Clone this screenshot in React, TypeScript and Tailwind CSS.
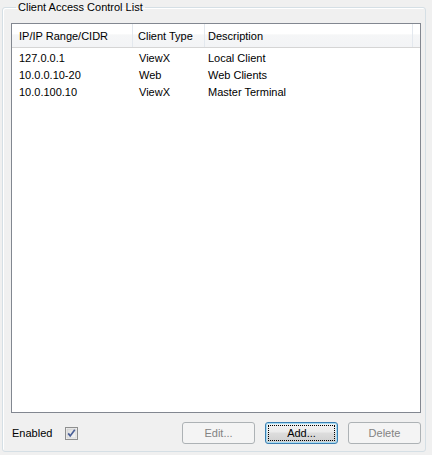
const rows = [
  { ip: '127.0.0.1', type: 'ViewX', desc: 'Local Client' },
  { ip: '10.0.0.10-20', type: 'Web', desc: 'Web Clients' },
  { ip: '10.0.100.10', type: 'ViewX', desc: 'Master Terminal' },
]

function DisabledButton({ label }: { label: string }) {
  return (
    <button
      disabled
      className="flex h-[22px] w-[73px] items-center justify-center rounded-[3px] border border-[#adb2b5] bg-[#f4f4f4] text-[#838383]"
    >
      {label}
    </button>
  )
}

export default function App() {
  return (
    <div
      className="h-[455px] w-[432px] bg-[#f0f0f0] pl-[2px] text-[11px] leading-[14px] text-black"
      style={{ fontFamily: '"Liberation Sans", Arial, sans-serif' }}
    >
      <fieldset className="h-[452px] w-[424px] rounded-[3px] border border-[#d5dfe5] pb-[7px] pl-[8px] pr-[4px] pt-[9px] shadow-[inset_1px_1px_0_#ffffff]">
        <legend className="ml-[5px] px-[2px] leading-[14px]">Client Access Control List</legend>

        {/* list view */}
        <div className="flex h-[390px] w-[410px] flex-col border border-[#828790] bg-white">
          <div className="flex h-[24px] shrink-0 border-b border-[#d5d5d5] bg-[linear-gradient(#ffffff_0%,#ffffff_45%,#f5f6f7_46%,#f3f4f6_100%)]">
            <div className="flex w-[121px] items-center border-r border-[#e3e8ee] pl-[7px]">IP/IP Range/CIDR</div>
            <div className="flex w-[72px] items-center border-r border-[#e3e8ee] pl-[5px]">Client Type</div>
            <div className="flex w-[208px] items-center border-r border-[#e3e8ee] pl-[3px]">Description</div>
            <div className="flex-1" />
          </div>
          <div className="pt-[1px]">
            {rows.map((r) => (
              <div key={r.ip} className="flex h-[17px] items-center">
                <div className="w-[121px] pl-[7px]">{r.ip}</div>
                <div className="w-[72px] pl-[6px]">{r.type}</div>
                <div className="pl-[3px]">{r.desc}</div>
              </div>
            ))}
          </div>
        </div>

        {/* bottom controls */}
        <div className="mt-[9px] flex h-[22px] items-center">
          <span className="ml-[1px] w-[53px]">Enabled</span>
          <svg width="13" height="13" viewBox="0 0 13 13" className="mt-[1px]">
            <defs>
              <linearGradient id="cbg" x1="0" y1="0" x2="1" y2="1">
                <stop offset="0" stopColor="#dcdcdc" />
                <stop offset="1" stopColor="#f7f7f7" />
              </linearGradient>
            </defs>
            <rect x="0.5" y="0.5" width="12" height="12" fill="#f4f4f4" stroke="#8e8f8f" />
            <rect x="2" y="2" width="9" height="9" fill="url(#cbg)" stroke="#c7c7c7" strokeWidth="0.6" />
            <path d="M3.2 6.4 L5.2 8.9 L9.8 2.8" fill="none" stroke="#4a5f97" strokeWidth="1.7" />
          </svg>
          <div className="ml-auto flex gap-[10px]">
            <DisabledButton label="Edit..." />
            <button className="flex h-[22px] w-[73px] items-center justify-center rounded-[3px] border border-[#3c7fb1] bg-[linear-gradient(#f2f2f2_0%,#ebebeb_45%,#dddddd_50%,#cfcfcf_100%)] p-[2px] shadow-[inset_0_0_0_1px_#a6dcf4]">
              <span className="flex h-full w-full items-center justify-center border border-dotted border-black">
                Add...
              </span>
            </button>
            <DisabledButton label="Delete" />
          </div>
        </div>
      </fieldset>
    </div>
  )
}
